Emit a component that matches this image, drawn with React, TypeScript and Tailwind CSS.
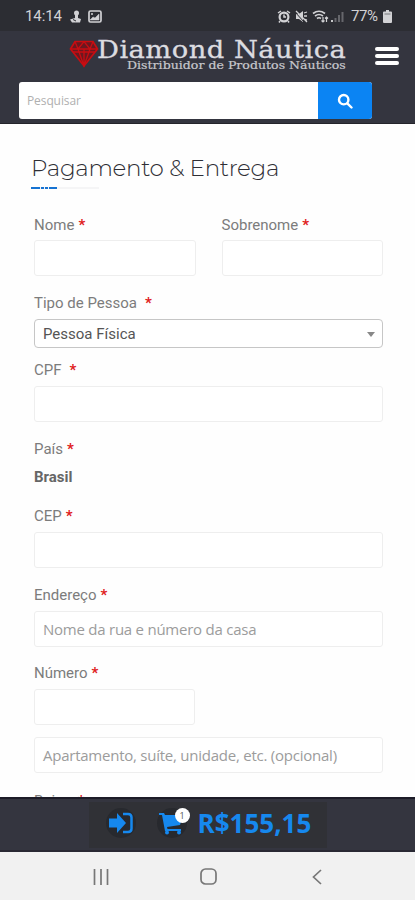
import React from "react";

const roboto = "font-['Roboto',sans-serif]";
const openSans = "font-['Open_Sans',sans-serif]";

function Label({ text, wide = false, className = "" }: { text: string; wide?: boolean; className?: string }) {
  return (
    <label className={`flex h-5 items-center whitespace-nowrap text-[15px] leading-5 text-[#7c7c7c] ${roboto} ${className}`}>
      {text}
      <span className={`font-bold text-[#e02020] ${wide ? "ml-2" : "ml-1"}`}>*</span>
    </label>
  );
}

function Box({ placeholder, className = "" }: { placeholder?: string; className?: string }) {
  return (
    <div className={`flex h-9 items-center whitespace-nowrap rounded-[3px] border border-[#eeeeee] bg-white pl-2 text-[15px] tracking-[-0.24px] text-[#9c9c9c] ${openSans} ${className}`}>
      {placeholder}
    </div>
  );
}

function StatusBar() {
  return (
    <div className={`flex h-[31px] shrink-0 items-center bg-[#2c2d33] pl-[25px] pr-[23px] pt-[2px] text-[#d2d2d5] ${roboto}`}>
      <span className="w-[38px] whitespace-nowrap text-[15px] tracking-[-0.1px]">14:14</span>
      <svg className="ml-[7px]" width="12" height="14" viewBox="0 0 12 14" fill="currentColor">
        <circle cx="6.500" cy="3" r="2.500" />
        <path d="M5 3h3v5l3 1-1 3.500H2L0 9.500 5 8z" />
        <path d="M3 9.500l3 1.500" stroke="#2c2d33" fill="none" />
      </svg>
      <svg className="ml-[6px]" width="14" height="13" viewBox="0 0 14 13" fill="none" stroke="currentColor" strokeWidth="1.7">
        <rect x="1" y="1" width="12" height="11" rx="1.5" />
        <path d="M2 10l3-3 2 1 4-4v6z" fill="currentColor" strokeWidth="0.5" />
        <path d="M3 4h2" />
      </svg>
      <span className="flex-1" />
      <svg width="14" height="13" viewBox="0 0 14 13" fill="none" stroke="currentColor">
        <circle cx="7" cy="7" r="4.4" strokeWidth="2.2" />
        <path d="M7 4.5V7h2M1 3l3-2M13 3l-3-2M3 11l-1 1.5M11 11l1 1.5" strokeWidth="1.5" />
      </svg>
      <svg className="ml-[4px]" width="13" height="13" viewBox="0 0 13 13" fill="currentColor">
        <path d="M1 4h3l4-3v11L4 9H1z" />
        <path d="M1 1l11 11M9 3l3-1M9 6h3M9 9l3 1" stroke="currentColor" strokeWidth="1.3" />
        <path d="M0 2l9 10" stroke="#2c2d33" />
      </svg>
      <svg className="ml-[4px]" width="17" height="13" viewBox="0 0 17 13" fill="none" stroke="currentColor" strokeWidth="1.7">
        <path d="M1 3.5q6-4.5 12 0M3 6q4-3 8 0M5 8.5q2-1.5 4 0" />
        <path d="M11 7v5M9.5 10.5L11 12l1.5-1.5M14.5 12V7M13 8.5L14.5 7 16 8.5" strokeWidth="1.2" />
      </svg>
      <svg className="ml-[2px]" width="13" height="13" viewBox="0 0 13 13" fill="#66676c">
        <path d="M0 10h2v2H0z" fill="#c8c8ca" />
        <path d="M3.5 8h2v4h-2zM7 5h2v7H7zM10.5 2h2v10h-2z" />
      </svg>
      <span className="ml-[7px] w-[29px] whitespace-nowrap text-[15px] tracking-[-0.4px]">77%</span>
      <svg className="ml-[3px]" width="9" height="13" viewBox="0 0 9 13" fill="currentColor">
        <path d="M3 0h3v1.5h2q1 0 1 1V12q0 1-1 1H1q-1 0-1-1V2.500q0-1 1-1h2z" />
        <path d="M1.500 4h6" stroke="#77787c" />
      </svg>
    </div>
  );
}

function Header() {
  return (
    <header className="h-[93px] shrink-0 border-b border-[#24242b] bg-[#34353f]">
      <div className="flex h-[51px] pl-[69px] pr-4">
        <svg className="mt-[9px] shrink-0" width="30" height="28" viewBox="0 0 30 28" fill="none" stroke="#c80d12" strokeWidth="1.7">
          <path d="M6 1.500h18l4.500 7.500L15 26 1.500 9z" fill="#6b1820" />
          <path d="M1.500 9h27M6 1.500L9 9l6 17 6-17 3-7.500M9 9l6-7.500L21 9M4 12h22M15 9v16" strokeWidth="1.300" />
        </svg>
        <div className="ml-[-2px] w-[252px] shrink-0 whitespace-nowrap pt-[9px] font-['DejaVu_Serif',serif] text-[#dcdce0]">
          <div className="h-[20px] w-fit origin-left scale-x-[1.14] text-[24px] leading-[20px] tracking-[0.4px] [-webkit-text-stroke:0.3px_#dcdce0]">Diamond Náutica</div>
          <div className="ml-[30px] h-[11px] w-fit origin-left scale-x-[1.16] text-[10.8px] leading-[11px] tracking-[0.02px] text-[#c8c8cd] [-webkit-text-stroke:0.2px_#c8c8cd]">Distribuidor de Produtos Náuticos</div>
        </div>
        <div className="ml-auto mr-0 mt-[16px] flex w-6 flex-col gap-[3px]">
          <span className="h-1 rounded-full bg-white" />
          <span className="h-1 rounded-full bg-white" />
          <span className="h-1 rounded-full bg-white" />
        </div>
      </div>
      <div className="ml-[19px] flex h-[37px] w-[353px] overflow-hidden rounded-[3px] bg-white">
        <span className={`flex flex-1 items-center pl-2 text-[12px] tracking-[-0.1px] text-[#b0b0b0] ${openSans}`}>Pesquisar</span>
        <button className="flex w-[54px] items-center justify-center bg-[#0b84f3]">
          <svg width="16" height="16" viewBox="0 0 16 16" fill="none" stroke="white" strokeWidth="2.400">
            <circle cx="6.700" cy="6.700" r="4.700" />
            <path d="M10.300 10.300l4.200 4.200" strokeLinecap="round" />
          </svg>
        </button>
      </div>
    </header>
  );
}

function CheckoutForm() {
  return (
    <main className="h-[673px] shrink-0 overflow-hidden bg-[#fefefe]">
      <h1 className="ml-[31px] mt-[29px] h-[30px] whitespace-nowrap font-['Montserrat','Inter',sans-serif] text-[23px] font-light leading-[30px] tracking-[-0.3px] text-[#2e2e35]">
        Pagamento &amp; Entrega
      </h1>
      <div className="ml-[31px] mt-[4px] flex h-[2px] w-[68px] bg-[#f5f5f6]">
        <span className="w-[9px] bg-[#1673d2]" />
        <span className="ml-px w-[3px] bg-[#1673d2]" />
        <span className="ml-px w-[3px] bg-[#1673d2]" />
        <span className="ml-px w-[8px] bg-[#1673d2]" />
      </div>
      <div className="ml-[34px] mt-[26px] w-[349px]">
        <div className="grid grid-cols-2 gap-[26px]">
          <div>
            <Label text="Nome" />
            <Box className="mt-[5px]" />
          </div>
          <div>
            <Label text="Sobrenome" />
            <Box className="mt-[5px]" />
          </div>
        </div>
        <Label text="Tipo de Pessoa" wide className="mt-[17px]" />
        <div className={`mt-[6px] flex h-[29px] items-center justify-between rounded-[4px] border border-[#c6c6c6] bg-white pl-2 pr-[7px] pt-px text-[15px] text-[#555] ${roboto}`}>
          Pessoa Física
          <span className="border-x-[4px] border-t-[5px] border-x-transparent border-t-[#888]" />
        </div>
        <Label text="CPF" wide className="mt-[12px]" />
        <Box className="mt-[6px]" />
        <Label text="País" className="mt-[17px]" />
        <div className={`mt-2 h-5 text-[15px] font-bold leading-5 text-[#666] ${roboto}`}>Brasil</div>
        <Label text="CEP" className="mt-[19px]" />
        <Box className="mt-[6px]" />
        <Label text="Endereço" className="mt-[17px]" />
        <Box className="mt-[6px]" placeholder="Nome da rua e número da casa" />
        <Label text="Número" className="mt-4" />
        <Box className="mt-[6px] w-[161px]" />
        <Box className="mt-3" placeholder="Apartamento, suíte, unidade, etc. (opcional)" />
        <Label text="Bairro" className="mt-[18px]" />
      </div>
    </main>
  );
}

function CartBar() {
  return (
    <div className="flex h-[55px] shrink-0 justify-center border-y-2 border-t-[#1d1c28] border-b-[#292833] bg-[#34353f]">
      <div className="mt-[3px] flex h-[46px] w-[238px] items-center bg-[#303136] pb-[4px] pl-[17px]">
        <span className="flex size-[30px] items-center justify-center rounded-full bg-[#27292e]">
          <svg width="24" height="22" viewBox="0 0 24 22" fill="#1688ee">
            <path d="M0 6.500h8V1l9 10-9 10v-5.500H0z" />
            <path d="M14 2h5q3.500 0 3.500 3.500v11q0 3.500-3.500 3.500h-5" fill="none" stroke="#1688ee" strokeWidth="2.500" />
          </svg>
        </span>
        <span className="relative ml-[21px] flex size-[30px] items-center justify-center rounded-full bg-[#27292e]">
          <svg width="25" height="23" viewBox="0 0 25 23" fill="#1688ee">
            <path d="M0 1h5l1 2h18l-3 10-13 2 .5 2H22v2H6L3 3H0z" />
            <circle cx="8" cy="20.500" r="2" />
            <circle cx="20" cy="20.500" r="2" />
          </svg>
          <span className={`absolute top-0 left-[18px] flex size-[15px] items-center justify-center rounded-full bg-white text-[9px] text-[#555] ${openSans}`}>1</span>
        </span>
        <span className={`ml-[11px] whitespace-nowrap text-[26px] font-bold leading-[30px] text-[#1688ee] ${openSans}`}>R$155,15</span>
      </div>
    </div>
  );
}

function NavBar() {
  return (
    <nav className="flex h-12 shrink-0 items-center justify-between bg-[#f1f1f1] pl-[93px] pr-[93px] pt-px text-[#777]">
      <svg width="16" height="16" viewBox="0 0 16 16" stroke="currentColor" strokeWidth="1.700">
        <path d="M1.500 0v16M8 0v16M14.500 0v16" />
      </svg>
      <svg className="-ml-[4px]" width="17" height="17" viewBox="0 0 17 17" fill="none" stroke="currentColor" strokeWidth="1.700">
        <rect x="1" y="1" width="15" height="15" rx="4.500" />
      </svg>
      <svg width="10" height="16" viewBox="0 0 10 16" fill="none" stroke="currentColor" strokeWidth="1.700">
        <path d="M9 1L1.500 8 9 15" />
      </svg>
    </nav>
  );
}

export default function App() {
  return (
    <div className="flex h-[900px] w-[415px] flex-col overflow-hidden bg-white">
      <StatusBar />
      <Header />
      <CheckoutForm />
      <CartBar />
      <NavBar />
    </div>
  );
}
